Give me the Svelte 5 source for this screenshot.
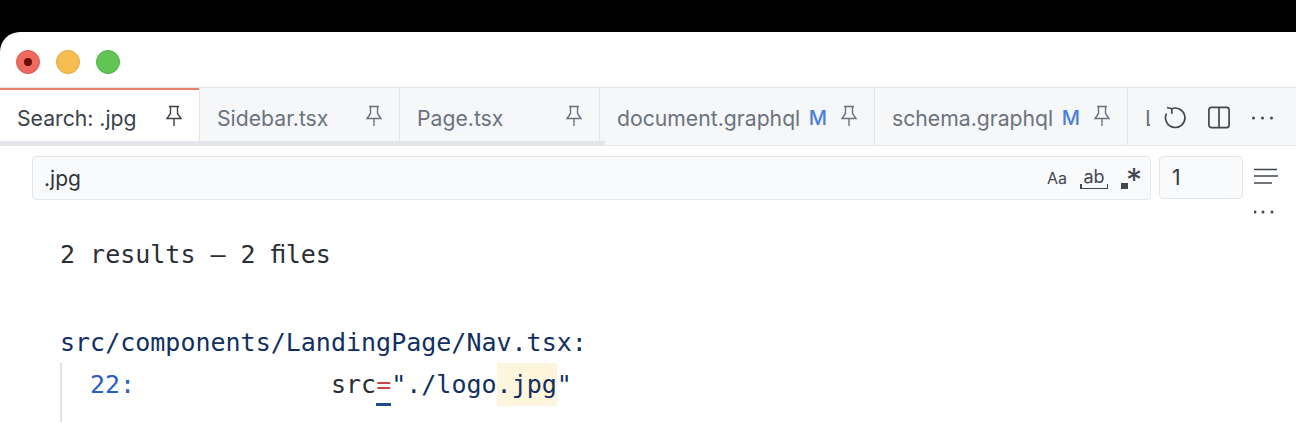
<script>
  const tabs = [
    { name: 'Search: .jpg', width: 200, active: true },
    { name: 'Sidebar.tsx', width: 200 },
    { name: 'Page.tsx', width: 200 },
    { name: 'document.graphql', width: 275, modified: true },
    { name: 'schema.graphql', width: 253, modified: true }
  ];
</script>

<div class="screen">
  <div class="window">
    <div class="titlebar">
      <span class="light red"><i></i></span>
      <span class="light yellow"></span>
      <span class="light green"></span>
    </div>

    <div class="tabbar">
      <div class="tabs">
        {#each tabs as tab}
          <div class="tab" class:active={tab.active} style="width: {tab.width}px">
            <span class="tab-name">{tab.name}</span>
            {#if tab.modified}<span class="badge">M</span>{/if}
            <svg class="pin" width="18" height="22" viewBox="0 0 18 22" fill="none" stroke="currentColor" stroke-width="1.4">
              <path d="M4 1.500h10M5.500 1.500v7L2 13.500h14l-3.500-5v-7M9 13.500V21" />
            </svg>
          </div>
        {/each}
        <div class="tab last"><span class="tab-name">L</span></div>
      </div>
      <div class="scroll-thumb"></div>
      <div class="actions">
        <svg width="24" height="24" viewBox="0 0 24 24" fill="none" stroke="#41474f" stroke-width="1.7">
          <path d="M8.500 2.800A9.700 9.700 0 1 1 3.500 7.500" />
          <path d="M4 1.500l4.800 1.300v5" />
        </svg>
        <svg width="24" height="24" viewBox="0 0 24 24" fill="none" stroke="#41474f" stroke-width="1.7">
          <rect x="1.900" y="1.400" width="20.200" height="20.200" rx="2.500" />
          <path d="M12 1.500v20" />
        </svg>
        <svg width="24" height="24" viewBox="0 0 24 24" fill="#41474f">
          <circle cx="2.500" cy="12" r="1.500" /><circle cx="11.500" cy="12" r="1.500" /><circle cx="20.500" cy="12" r="1.500" />
        </svg>
      </div>
    </div>

    <div class="findrow">
      <div class="query">
        <span>.jpg</span>
        <div class="toggles">
          <span class="aa">Aa</span>
          <span class="word">ab</span>
          <span class="regex"><b></b><em>*</em></span>
        </div>
      </div>
      <div class="context">1</div>
      <div class="more">
        <svg width="26" height="18" viewBox="0 0 26 18" stroke="#41474f" stroke-width="1.300">
          <path d="M0 2.500h23M0 9h24M0 16h18" />
        </svg>
        <svg width="24" height="6" viewBox="0 0 24 6" fill="#41474f">
          <circle cx="1" cy="3" r="1.500" /><circle cx="9" cy="3" r="1.500" /><circle cx="18" cy="3" r="1.500" />
        </svg>
      </div>
    </div>

    <div class="results">
      <div class="summary">2 results – 2 ﬁles</div>
      <div class="file">src/components/LandingPage/Nav.tsx:</div>
      <div class="match">
        <span class="lineno">22:</span><span class="plain">src</span><span class="eq">=</span><span>"./logo</span><span class="hit">.jpg</span><span>"</span>
      </div>
    </div>
  </div>
</div>

<style>
  :global(body) {
    margin: 0;
    background: #000;
  }

  .screen {
    height: 422px;
    padding-top: 32px;
    box-sizing: border-box;
    background: #000;
    overflow: hidden;
  }

  .window {
    height: 390px;
    background: #fff;
    border-radius: 20px 0 0 0;
    overflow: hidden;
    font-family: Inter, "Noto Sans", sans-serif;
  }

  .titlebar {
    height: 56px;
    box-sizing: border-box;
    padding: 18px 16px 0;
    display: flex;
    gap: 16px;
    border-bottom: 1px solid #e3e5e9;
  }

  .light {
    width: 24px;
    height: 24px;
    box-sizing: border-box;
    border-radius: 50%;
    border: 1px solid;
    display: flex;
    align-items: center;
    justify-content: center;
  }

  .red { background: #ee6a5f; border-color: #d9584e; }
  .yellow { background: #f6be50; border-color: #dfa53c; }
  .green { background: #61c554; border-color: #52ad46; }

  .red i {
    width: 8px;
    height: 8px;
    border-radius: 50%;
    background: #6b0f0a;
  }

  .tabbar {
    position: relative;
    height: 58px;
    box-sizing: border-box;
    background: #f6f7f9;
    border-bottom: 1px solid #e3e5e9;
    overflow: hidden;
  }

  .tabs {
    display: flex;
    height: 57px;
  }

  .tab {
    flex: none;
    height: 57px;
    box-sizing: border-box;
    padding: 2px 16px 0 17px;
    border-right: 1px solid #e3e5e9;
    display: flex;
    align-items: center;
    font-size: 21.2px;
    color: #6a737d;
  }

  .tab.active {
    background: #fff;
    color: #3b424a;
    box-shadow: inset 0 2px 0 #e9806e;
  }

  .tab-name {
    flex: 1;
    white-space: nowrap;
    overflow: hidden;
  }

  .badge {
    color: #4c7fd8;
    font-size: 20px;
    font-weight: 500;
    margin: 0 13px 0 8px;
  }

  .pin {
    flex: none;
    margin-top: -3px;
  }

  .last {
    width: 60px;
  }

  .scroll-thumb {
    position: absolute;
    left: 0;
    bottom: 0;
    width: 605px;
    height: 4px;
    background: #e3e5ea;
  }

  .actions {
    position: absolute;
    top: 0;
    right: 0;
    width: 146px;
    height: 57px;
    box-sizing: border-box;
    padding: 2px 0 0 13px;
    background: #f6f7f9;
    display: flex;
    align-items: center;
    gap: 20px;
  }

  .findrow {
    display: flex;
    padding: 10px 0 0 32px;
    height: 44px;
    gap: 8px;
  }

  .query {
    width: 1119px;
    height: 44px;
    box-sizing: border-box;
    border: 1px solid #e3e5e9;
    border-radius: 4px;
    background: #f9fafb;
    padding: 0 9px 0 11px;
    display: flex;
    align-items: center;
    justify-content: space-between;
    font-size: 21px;
    color: #2f363d;
  }

  .toggles {
    display: flex;
    align-items: center;
    gap: 12px;
    color: #41474f;
  }

  .aa {
    font-size: 16px;
    margin-right: 1px;
    margin-left: -1px;
  }

  .word {
    position: relative;
    font-size: 18px;
    line-height: 20px;
    width: 28px;
    text-align: center;
    padding-bottom: 1px;
    border-bottom: 1.500px solid #41474f;
  }

  .word::before,
  .word::after {
    content: "";
    position: absolute;
    bottom: 0;
    width: 1.500px;
    height: 4px;
    background: #41474f;
  }

  .word::before { left: 0; }
  .word::after { right: 0; }

  .regex {
    position: relative;
    width: 20px;
    height: 24px;
    margin-left: 1px;
  }

  .regex b {
    position: absolute;
    left: 0;
    bottom: 1px;
    width: 7px;
    height: 6px;
    background: #41474f;
  }

  .regex em {
    position: absolute;
    right: -1px;
    top: -3px;
    font-style: normal;
    font-size: 32px;
    line-height: 36px;
  }

  .context {
    width: 84px;
    height: 43px;
    box-sizing: border-box;
    border: 1px solid #e3e5e9;
    border-radius: 4px;
    background: #f9fafb;
    padding-left: 12px;
    display: flex;
    align-items: center;
    font-size: 21px;
    color: #2f363d;
  }

  .more {
    flex: none;
    display: flex;
    flex-direction: column;
    gap: 24px;
    padding: 11px 0 0 3px;
  }

  .more svg {
    flex: none;
  }

  .results {
    padding: 33px 0 0 60px;
    font-family: "DejaVu Sans Mono", monospace;
    font-size: 25px;
    line-height: 44px;
    color: #12305f;
  }

  .summary {
    color: #2a2f35;
    height: 88px;
  }

  .file {
    height: 42px;
  }

  .match {
    height: 60px;
    border-left: 2px solid #dfe1e6;
    padding-left: 28px;
    white-space: pre;
  }

  .lineno {
    display: inline-block;
    width: 241px;
    color: #2a5fc0;
  }

  .plain { color: #2a2f35; }

  .eq {
    color: #c9454c;
    position: relative;
  }

  .eq::after {
    content: "";
    position: absolute;
    left: 0;
    right: 0;
    bottom: -7px;
    height: 3px;
    background: #1f4a90;
  }

  .hit {
    display: inline-block;
    background: #fdf6dd;
    height: 43px;
  }
</style>
